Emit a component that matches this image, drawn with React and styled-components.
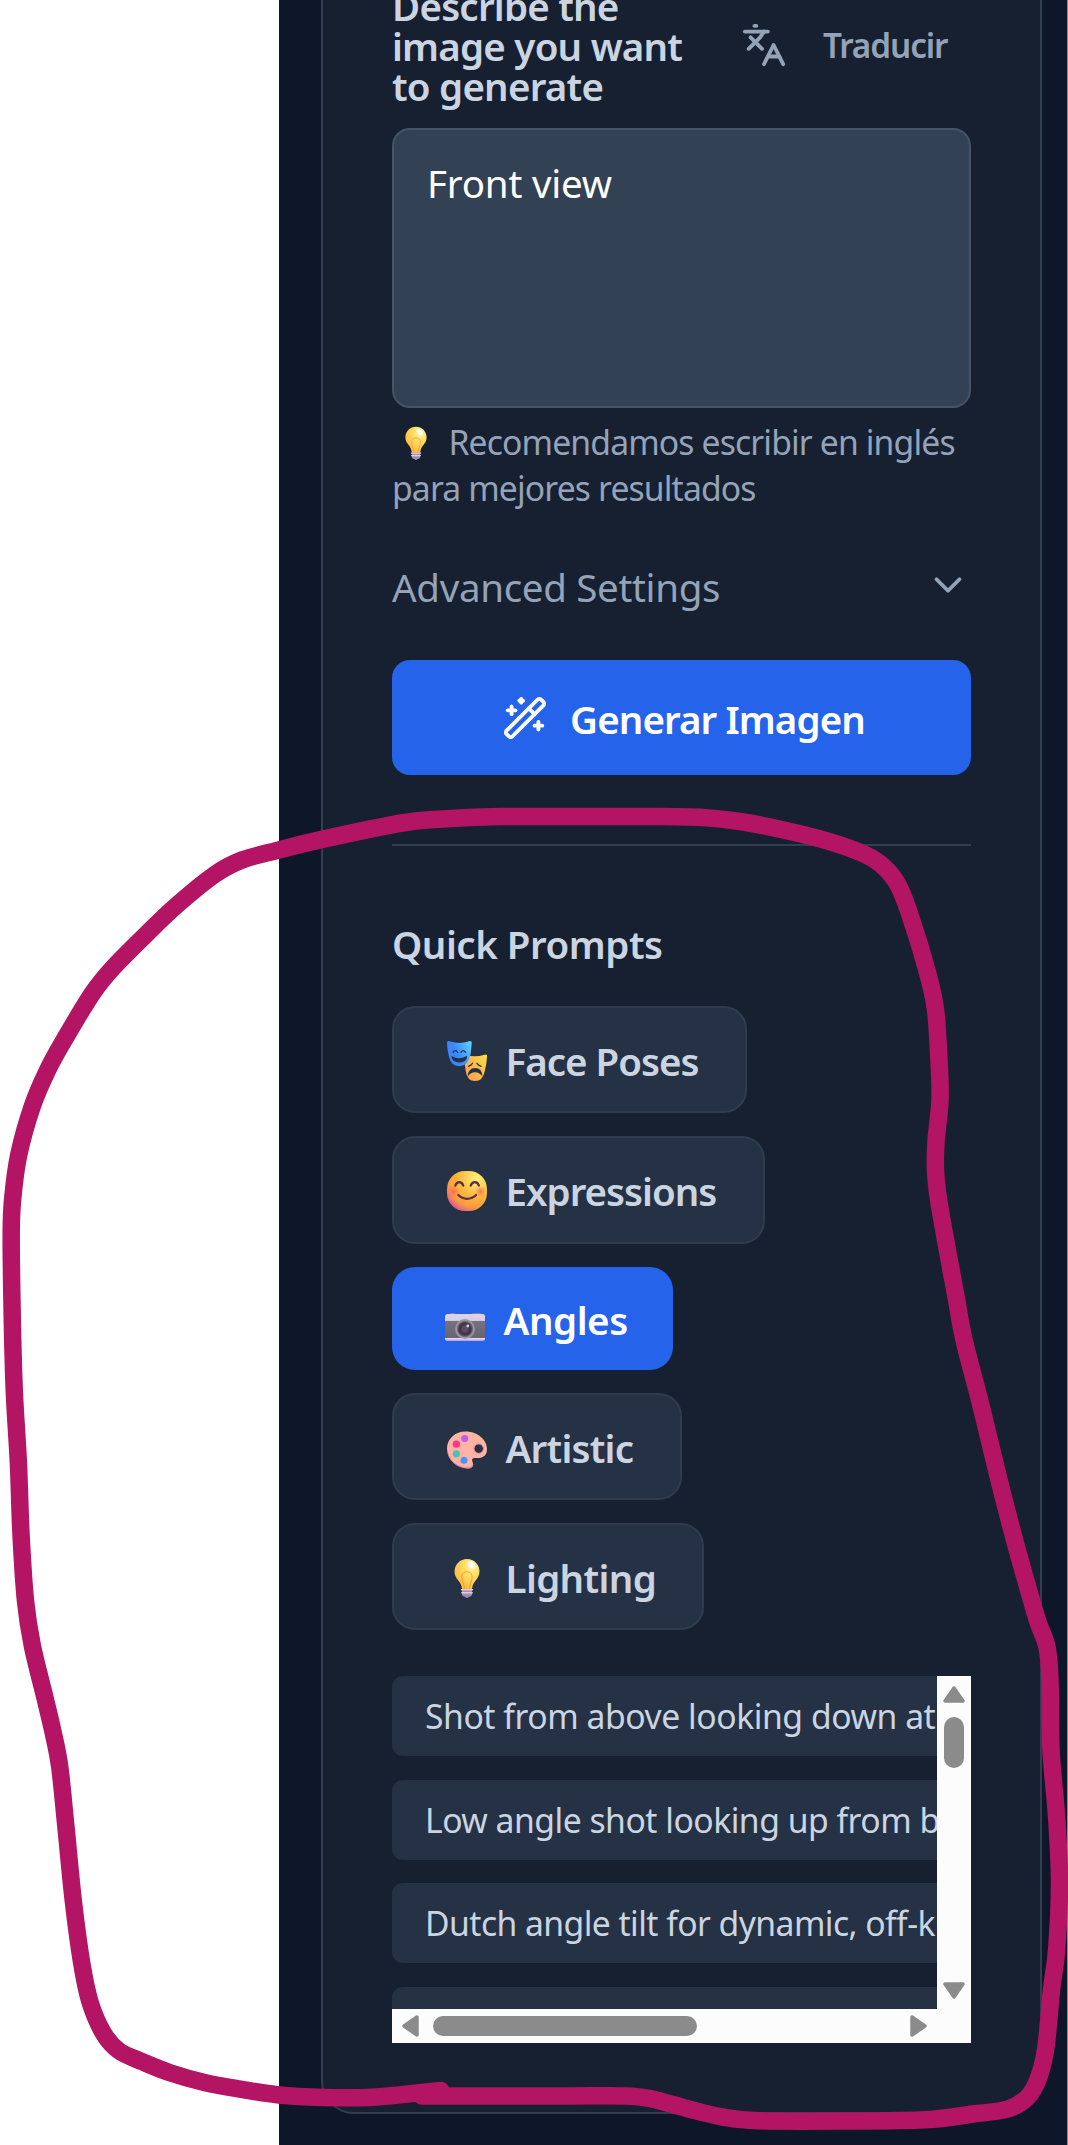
import React, { useState } from "react";
import styled, { createGlobalStyle, css } from "styled-components";
import { ChevronDown, Languages, WandSparkles } from "lucide-react";

const colors = {
  page: "#0e1629",
  card: "#162031",
  line: "#303e50",
  text: "#cbd5e1",
  muted: "#94a3b8",
  chip: "#253145",
  chipLine: "#303c4d",
  blue: "#2563eb",
  marker: "#b31463",
};

const GlobalStyle = createGlobalStyle`
  *, *::before, *::after { box-sizing: border-box; }
  html, body { margin: 0; background: #fff; }
  body { overflow: hidden; }
  button, textarea { font: inherit; margin: 0; border: 0; }
`;

const Page = styled.div`
  position: relative;
  width: 1068px;
  height: 2145px;
  padding-left: 279px;
  overflow: hidden;
  font-family: "Noto Sans", "Open Sans", sans-serif;
  font-size: 38.5px;
`;

const Panel = styled.main`
  height: 100%;
  padding: 0 25px 31px 42px;
  background: ${colors.page};
  border-right: 1px solid #858a94;
`;

const Card = styled.section`
  display: flex;
  flex-direction: column;
  height: 100%;
  padding: 0 69px;
  background: ${colors.card};
  border: 2px solid ${colors.line};
  border-top: 0;
  border-radius: 0 0 33px 33px;
  padding-inline: 69px;
`;

const PromptHeader = styled.header`
  display: grid;
  grid-template-columns: 349px 1fr;
  align-items: center;
  height: 120px;
  margin-top: -14px;
  flex: none;
`;

const PromptLabel = styled.label`
  width: 310px;
  color: ${colors.text};
  font-weight: 590;
  line-height: 40px;
  letter-spacing: -0.78px;
`;

const TranslateButton = styled.button`
  display: flex;
  align-items: center;
  gap: 36px;
  height: 46px;
  padding: 0;
  margin-bottom: 2px;
  background: none;
  color: ${colors.muted};
  font-size: 33.3px;
  font-weight: 560;
  line-height: 46px;
  letter-spacing: -1.1px;
`;

const PromptInput = styled.textarea`
  display: block;
  flex: none;
  width: 100%;
  height: 280px;
  margin-top: 22px;
  padding: 25px 33px;
  resize: none;
  outline: none;
  overflow: hidden;
  color: #fff;
  background: #334154;
  border: 2px solid #455468;
  border-radius: 18px;
  line-height: 56px;
  letter-spacing: -0.2px;
`;

const Hint = styled.p`
  flex: none;
  margin: 11px -10px 0 0;
  color: ${colors.muted};
  font-size: 33.7px;
  line-height: 46px;
  letter-spacing: -0.86px;
`;

const HintIcon = styled.span`
  display: inline-block;
  width: 56.5px;
  padding-left: 7px;
  height: 34px;
  vertical-align: -5px;
  line-height: 0;
`;

const SettingsToggle = styled.button`
  display: flex;
  flex: none;
  align-items: center;
  justify-content: space-between;
  height: 54px;
  margin-top: 49px;
  padding: 0;
  background: none;
  color: ${colors.muted};
  line-height: 54px;
  letter-spacing: -0.32px;

  svg { margin-bottom: 4px; }
`;

const GenerateButton = styled.button`
  display: flex;
  flex: none;
  align-items: center;
  justify-content: center;
  gap: 22px;
  height: 115px;
  margin-top: 46px;
  padding: 0 0 0 4px;
  color: #fff;
  background: ${colors.blue};
  border-radius: 18px;
  font-weight: 600;
  letter-spacing: -0.92px;

  span { padding-top: 2px; }
`;

const QuickPrompts = styled.section`
  display: flex;
  flex-direction: column;
  margin-top: 69px;
  padding-top: 71px;
  border-top: 2px solid ${colors.line};
`;

const QuickTitle = styled.h2`
  margin: 0 0 35px;
  color: ${colors.text};
  font-size: inherit;
  font-weight: 590;
  line-height: 54px;
  letter-spacing: -0.48px;
`;

const Chips = styled.div`
  display: flex;
  flex-direction: column;
  align-items: flex-start;
  gap: 23px;
`;

const Chip = styled.button`
  display: flex;
  align-items: center;
  gap: 18.5px;
  height: 107.3px;
  padding: 3px 46.3px 0 53px;
  color: ${colors.text};
  background: ${colors.chip};
  border: 2px solid ${colors.chipLine};
  border-radius: 23px;
  font-weight: 590;
  letter-spacing: ${(p) => p.$tracking}px;

  svg { display: block; overflow: visible; }

  ${(p) =>
    p.$active &&
    css`
      height: 103px;
      padding-right: 45.3px;
      color: #fff;
      background: ${colors.blue};
      border: 0;
    `}
`;

const Scroller = styled.div`
  display: grid;
  grid-template-columns: minmax(0, 1fr) 34px;
  grid-template-rows: 333px 34px;
  margin-top: 45.8px;
  background: #fcfcfc;
`;

const PromptList = styled.ul`
  display: flex;
  flex-direction: column;
  gap: 23.3px;
  margin: 0;
  padding: 0;
  overflow: hidden;
  list-style: none;
  background: ${colors.card};
`;

const PromptItem = styled.li`
  flex: none;
  width: 1030px;
  height: 80.3px;
  padding-left: 33px;
  color: ${colors.text};
  background: ${colors.chip};
  border-radius: 11px;
  font-size: 33.7px;
  line-height: 80px;
  letter-spacing: ${(p) => p.$tracking}px;
  white-space: nowrap;
`;

const ScrollTrack = styled.div`
  display: flex;
  flex-direction: ${(p) => (p.$vertical ? "column" : "row")};
  align-items: center;
  padding: ${(p) => (p.$vertical ? "10px 0" : "0 10px")};

  svg:last-child { ${(p) => (p.$vertical ? "margin-top" : "margin-left")}: auto; }
`;

const ScrollThumb = styled.div`
  width: ${(p) => (p.$vertical ? 20 : 264)}px;
  height: ${(p) => (p.$vertical ? 51 : 20)}px;
  margin: ${(p) => (p.$vertical ? "14px 0 0" : "0 0 0 14px")};
  border-radius: 10px;
  background: #8b8b8b;
`;

const MarkerLayer = styled.svg`
  position: absolute;
  inset: 0;
  pointer-events: none;
`;

function Arrow({ direction }) {
  const horizontal = direction === "left" || direction === "right";
  const points = {
    up: "M11 2 L20 15 H2 Z",
    down: "M2 2 H20 L11 15 Z",
    left: "M15 2 V20 L2 11 Z",
    right: "M2 2 V20 L15 11 Z",
  };
  return (
    <svg width={horizontal ? 17 : 22} height={horizontal ? 22 : 17}>
      <path d={points[direction]} fill="#8b8b8b" stroke="#8b8b8b" strokeWidth="3.5" strokeLinejoin="round" />
    </svg>
  );
}

function BulbIcon({ size = 40, id }) {
  return (
    <svg width={size} height={size} viewBox="0 0 40 40">
      <defs>
        <radialGradient id={id} cx="0.7" cy="0.25" r="0.85">
          <stop offset="0" stopColor="#fff4b0" />
          <stop offset="0.35" stopColor="#ffe066" />
          <stop offset="1" stopColor="#ffb43b" />
        </radialGradient>
      </defs>
      <path d="M15 30h10v7q-1 1.5-3 1.700q-2 2.500-4 0q-2-.2-3-1.700z" fill="#a58bb8" />
      <path d="M14.500 31.800h11M14.800 34.800h10.400" stroke="#dccfe2" strokeWidth="1.400" strokeLinecap="round" />
      <path d="M20 1C13 1 7.500 6.500 7.500 13.500c0 4 1.800 6.500 4 9.200 2 2.500 3 4.500 3.300 7.300q.2 1.300 1.500 1.300h7.400q1.300 0 1.500-1.300c.3-2.800 1.300-4.800 3.300-7.300 2.200-2.700 4-5.200 4-9.200C32.500 6.500 27 1 20 1z" fill={`url(#${id})`} />
      <path d="M17.500 30.500c0-4-2.700-7.500-2.700-11.500 0-7 10.400-7 10.400 0 0 4-2.700 7.500-2.700 11.500" fill="none" stroke="#f5982f" strokeWidth="1.100" opacity="0.8" />
      <ellipse cx="24.500" cy="6.800" rx="4.200" ry="2.900" transform="rotate(38 24.500 6.800)" fill="#fff" opacity="0.9" />
    </svg>
  );
}

function MasksIcon() {
  return (
    <svg width="40" height="40" viewBox="0 0 40 40">
      <defs>
        <linearGradient id="maskBlue" x1="0" x2="1" y1="0.5" y2="0">
          <stop offset="0.3" stopColor="#3a86fa" />
          <stop offset="1" stopColor="#64d6fd" />
        </linearGradient>
        <linearGradient id="maskGold" x1="0" x2="1" y1="0.8" y2="0">
          <stop offset="0" stopColor="#ff9a50" />
          <stop offset="1" stopColor="#fde047" />
        </linearGradient>
      </defs>
      <path d="M16.800 16q-.2-2.200 2-1.700 4.500.9 9 .9 4.600 0 10-1.500 2.600-.5 2.300 1.800-.5 7-2.300 14.500Q36 40 28 40q-8 0-9.300-10z" fill="url(#maskGold)" />
      <path d="M0 2Q0-.5 2.600.2q5.600 1.800 10 1.800 4 0 9.500-1.800Q25-.5 24.700 2c-.4 5-.6 9-1.700 13.500Q20.600 25 12.300 25.200 4 25 1.900 15.500 0 8 0 2z" fill="url(#maskBlue)" />
      <g fill="none" stroke="#233149" strokeLinecap="round">
        <path d="M6 11.300q2.200-3.400 4.800 0M14 11.300q2.300-3.400 4.600 0" strokeWidth="1.300" />
        <path d="M21.500 25.300q3-1 4-3M30 22.300q1 2 4 3" strokeWidth="1.300" />
      </g>
      <path d="M4.400 15q8 4.500 15.800-.2 0 6.500-7.800 6.700Q5 21.500 4.400 15z" fill="#233149" />
      <path d="M20.800 35.500q.3-8.500 7.300-8.500t7.200 8.300q-3-4-7.200-4-4.500 0-7.300 4.200z" fill="#233149" />
    </svg>
  );
}

function SmileIcon() {
  return (
    <svg width="40" height="40" viewBox="0 0 40 40">
      <defs>
        <radialGradient id="smileFace" cx="0.75" cy="0.18" r="0.9">
          <stop offset="0" stopColor="#fff07a" />
          <stop offset="0.55" stopColor="#ffb43a" />
          <stop offset="0.82" stopColor="#fb9a3d" />
          <stop offset="1" stopColor="#e0608d" />
        </radialGradient>
        <radialGradient id="smileCheek">
          <stop offset="0" stopColor="#ff5d5d" stopOpacity="0.75" />
          <stop offset="1" stopColor="#ff5d5d" stopOpacity="0" />
        </radialGradient>
      </defs>
      <rect width="40" height="40" rx="18" fill="url(#smileFace)" />
      <circle cx="6.500" cy="20.500" r="6" fill="url(#smileCheek)" />
      <circle cx="33.500" cy="20.500" r="5.500" fill="url(#smileCheek)" />
      <g fill="none" stroke="#54304f" strokeWidth="2.200" strokeLinecap="round">
        <path d="M8.300 14.700q1.300-3.500 4-3.500t4 3.500M23.700 14.700q1.300-3.500 4.200-3.500t4 3.500" />
        <path d="M11.300 24q3.700 3.800 8.900 3.800t8.900-3.800" />
      </g>
    </svg>
  );
}

function CameraIcon() {
  return (
    <svg width="40" height="40" viewBox="0 0 40 40">
      <defs>
        <linearGradient id="cameraBody" x1="0" x2="0" y1="0" y2="1">
          <stop offset="0" stopColor="#ddd3e6" />
          <stop offset="0.24" stopColor="#d7cfe4" />
          <stop offset="0.25" stopColor="#76727f" />
          <stop offset="0.87" stopColor="#686371" />
          <stop offset="0.88" stopColor="#efe5fa" />
          <stop offset="1" stopColor="#b69bdc" />
        </linearGradient>
      </defs>
      <g transform="translate(0 13)">
        <rect x="5" y="0" width="5" height="3" rx="1" fill="#8b8090" />
        <rect x="27" y="0" width="9" height="3" rx="1" fill="#8b8090" />
        <rect y="1" width="40" height="27" rx="2.500" fill="url(#cameraBody)" />
        <circle cx="20" cy="16" r="10" fill="#9a95a2" />
        <circle cx="20" cy="16" r="8" fill="#6b6373" />
        <circle cx="20" cy="16" r="6.800" fill="#42364b" />
        <circle cx="20" cy="16" r="3.500" fill="#5c4c68" />
        <circle cx="22.800" cy="13" r="1.400" fill="#d8cfe0" />
      </g>
    </svg>
  );
}

function PaletteIcon() {
  return (
    <svg width="40" height="40" viewBox="0 0 40 40">
      <g transform="translate(0 3.500)">
        <path fillRule="evenodd" fill="#ffb3a5" d="M18.500 0C31 0 40 8.500 40 17.500 40 24 36 26.500 31 26.500h-3.500q-2.700 0-2.400 2.600l1 3.500Q26.500 37 21 37C9 36 0 27.500 0 17 0 7.500 8 0 18.500 0zM31.700 12.700a4.400 4.400 0 1 0 0 8.800 4.400 4.400 0 1 0 0-8.800z" />
        <path d="M1 22C4 32 12 36.500 21 36.500q4.500 0 5-3.700" fill="none" stroke="#e8798d" strokeWidth="1" />
        <circle cx="31.700" cy="17.100" r="4.800" fill="none" stroke="#e5788a" strokeWidth="0.800" />
        <circle cx="17.700" cy="7" r="3.600" fill="#c45bee" />
        <circle cx="9.300" cy="12.700" r="3.600" fill="#f9368d" />
        <circle cx="9.300" cy="22.300" r="3.600" fill="#45c4b8" />
        <circle cx="17" cy="28.700" r="3.500" fill="#4794fb" />
      </g>
    </svg>
  );
}

// Centre line of the hand-drawn loop, in page pixels.
const strokePoints = [
  [441, 2090.5], [402, 2094.6], [367.8, 2097.5], [323.6, 2097.5], [279, 2095], [238.4, 2088.8],
  [204.4, 2082.5], [170, 2072.7], [143, 2062], [119.2, 2051], [103.9, 2034], [90.3, 2003],
  [81.7, 1963], [73.2, 1900], [65.7, 1824.5], [59.6, 1766], [52.8, 1731], [44.3, 1695],
  [32.4, 1646], [25.5, 1601], [21, 1534], [18.4, 1463], [14.3, 1391.6], [12.3, 1320],
  [11.2, 1235], [12.6, 1199.6], [18.7, 1155], [32.4, 1106], [47.7, 1070], [64.7, 1039],
  [92, 994], [112.4, 968.4], [146.5, 934], [177, 905], [214.6, 874.6], [242, 860],
  [279, 850], [322, 839.4], [402, 823], [443, 819], [500, 816.6], [534, 816.6], [660, 816.6],
  [700, 817.3], [743.5, 822], [783.6, 830], [827, 840.8], [860.5, 852.5], [880.6, 864], [897, 883],
  [909, 912], [927.4, 972], [935.5, 1009.6], [939, 1061], [940, 1100], [936, 1141.7],
  [935.5, 1170], [938.5, 1199], [947.5, 1250.7], [956, 1296.7], [964, 1339.7], [981, 1405.7],
  [997.7, 1474.6], [1014, 1538], [1030, 1595], [1038, 1622], [1047, 1647], [1050, 1680],
  [1051, 1750], [1056.6, 1816.7], [1059.5, 1883], [1056.6, 1950], [1051.5, 1990], [1046, 2046.7],
  [1039, 2076.7], [1028, 2096.7], [1008, 2109], [973, 2114], [925, 2119.8], [840, 2121], [758, 2120.7],
  [722.7, 2117], [687.6, 2108.7], [652, 2099], [626, 2096], [560, 2096], [422, 2096],
];

function smoothPath(points) {
  let d = `M${points[0].join(" ")}`;
  for (let i = 0; i < points.length - 1; i += 1) {
    const a = points[Math.max(i - 1, 0)];
    const b = points[i];
    const c = points[i + 1];
    const e = points[Math.min(i + 2, points.length - 1)];
    d += ` C${b[0] + (c[0] - a[0]) / 6} ${b[1] + (c[1] - a[1]) / 6} ${c[0] - (e[0] - b[0]) / 6} ${c[1] - (e[1] - b[1]) / 6} ${c[0]} ${c[1]}`;
  }
  return d;
}

const categories = [
  { name: "Face Poses", icon: <MasksIcon />, tracking: -1 },
  { name: "Expressions", icon: <SmileIcon />, tracking: -1 },
  { name: "Angles", icon: <CameraIcon />, tracking: -0.46 },
  { name: "Artistic", icon: <PaletteIcon />, tracking: -0.77 },
  { name: "Lighting", icon: <BulbIcon id="bulbChip" />, tracking: -0.64 },
];

const prompts = [
  { text: "Shot from above looking down at", tracking: -0.45 },
  { text: "Low angle shot looking up from below", tracking: -0.5 },
  { text: "Dutch angle tilt for dynamic, off-kilter", tracking: -0.56 },
  { text: "", tracking: 0 },
];

export default function App() {
  const [active, setActive] = useState("Angles");
  return (
    <Page>
      <GlobalStyle />
      <Panel>
        <Card>
          <PromptHeader>
            <PromptLabel htmlFor="prompt">Describe the image you want to generate</PromptLabel>
            <TranslateButton>
              <Languages size={46} />
              Traducir
            </TranslateButton>
          </PromptHeader>
          <PromptInput id="prompt" defaultValue="Front view" spellCheck={false} />
          <Hint>
            <HintIcon><BulbIcon size={34} id="bulbHint" /></HintIcon>
            Recomendamos escribir en inglés para mejores resultados
          </Hint>
          <SettingsToggle>
            Advanced Settings
            <ChevronDown size={46} />
          </SettingsToggle>
          <GenerateButton>
            <WandSparkles size={46} />
            <span>Generar Imagen</span>
          </GenerateButton>
          <QuickPrompts>
            <QuickTitle>Quick Prompts</QuickTitle>
            <Chips>
              {categories.map((c) => (
                <Chip key={c.name} $active={c.name === active} $tracking={c.tracking} onClick={() => setActive(c.name)}>
                  {c.icon}
                  {c.name}
                </Chip>
              ))}
            </Chips>
            <Scroller>
              <PromptList>
                {prompts.map((p, i) => (
                  <PromptItem key={i} $tracking={p.tracking}>{p.text}</PromptItem>
                ))}
              </PromptList>
              <ScrollTrack $vertical>
                <Arrow direction="up" />
                <ScrollThumb $vertical />
                <Arrow direction="down" />
              </ScrollTrack>
              <ScrollTrack>
                <Arrow direction="left" />
                <ScrollThumb />
                <Arrow direction="right" />
              </ScrollTrack>
            </Scroller>
          </QuickPrompts>
        </Card>
      </Panel>
      <MarkerLayer width="1068" height="2145">
        <path d={smoothPath(strokePoints)} fill="none" stroke={colors.marker} strokeWidth="17.500" strokeLinecap="round" strokeLinejoin="round" />
      </MarkerLayer>
    </Page>
  );
}
